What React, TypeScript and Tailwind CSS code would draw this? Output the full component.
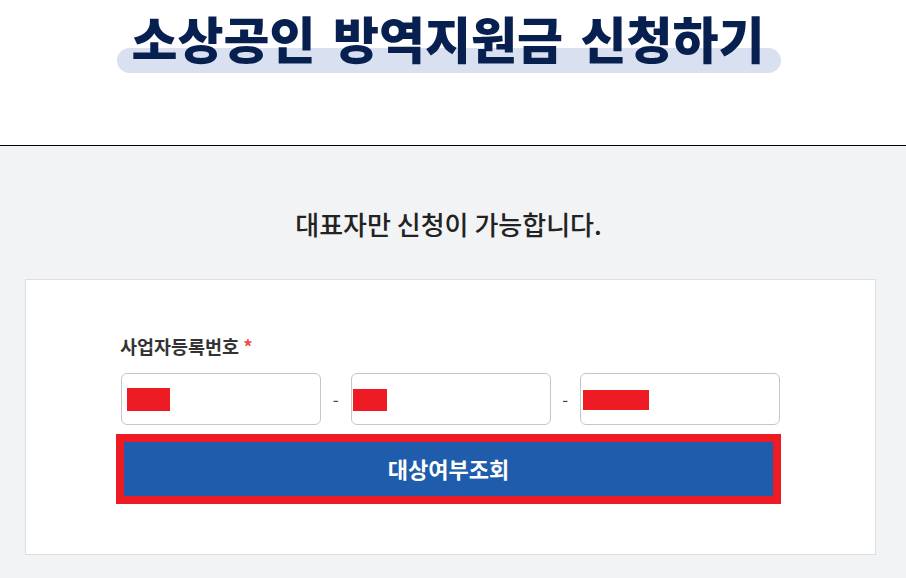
const font = "font-['Noto_Sans_CJK_KR','Noto_Sans',sans-serif]"

const Redact = ({ className }: { className: string }) => (
  <span className={`block bg-[#ed1c24] ${className}`} />
)

const NumberInput = ({ children }: { children?: React.ReactNode }) => (
  <div className="flex h-[52px] w-[200px] items-center rounded-[6px] border border-[#c6c6c6] bg-white">
    {children}
  </div>
)

const Dash = () => (
  <div className="flex flex-1 items-center justify-center text-[17px] leading-none text-[#444]">-</div>
)

export default function App() {
  return (
    <div className={`min-h-[578px] w-full bg-[#f2f3f5] ${font}`}>
      <header className="flex h-[146px] justify-center border-b border-black bg-white pt-[12px]">
        <div className="relative inline-block h-[52px] pr-[10px]">
          <h1 className="relative z-10 text-[50px] font-black leading-none tracking-[0px] text-[#08204f] [word-spacing:6px]">
            <span className="absolute left-[-15px] right-[-17px] top-[36px] -z-10 h-[25px] rounded-full bg-[#d9e0ef]" />
            소상공인 방역지원금 신청하기
          </h1>
        </div>
      </header>

      <section className="flex flex-col pt-[65px]">
        <p className="pr-[9px] text-center text-[26px] font-medium leading-none text-[#222]">대표자만 신청이 가능합니다.</p>

        <div className="ml-[25px] mt-[42px] h-[276px] w-[851px] border border-[#dcdfe3] bg-white pt-[57px]">
          <div className="ml-[90px] flex w-[665px] flex-col">
            <label className="pl-[4px] text-[18.5px] font-bold leading-none text-[#333]">
              사업자등록번호 <span className="text-[#ef4b4b]">*</span>
            </label>

            <div className="ml-[5px] mt-[17px] flex w-[659px] items-center">
              <NumberInput>
                <Redact className="ml-[5px] mt-[1px] h-[23px] w-[43px]" />
              </NumberInput>
              <Dash />
              <NumberInput>
                <Redact className="ml-[1px] mt-[2px] h-[22px] w-[34px]" />
              </NumberInput>
              <Dash />
              <NumberInput>
                <Redact className="ml-[2px] mt-[2px] h-[20px] w-[66px]" />
              </NumberInput>
            </div>

            <button
              type="button"
              className="mt-[9px] flex h-[70px] w-[665px] items-center justify-center border-[8px] border-[#ed1c24] bg-[#1f5dac] text-[22px] font-bold text-white"
            >
              대상여부조회
            </button>
          </div>
        </div>
      </section>
    </div>
  )
}
